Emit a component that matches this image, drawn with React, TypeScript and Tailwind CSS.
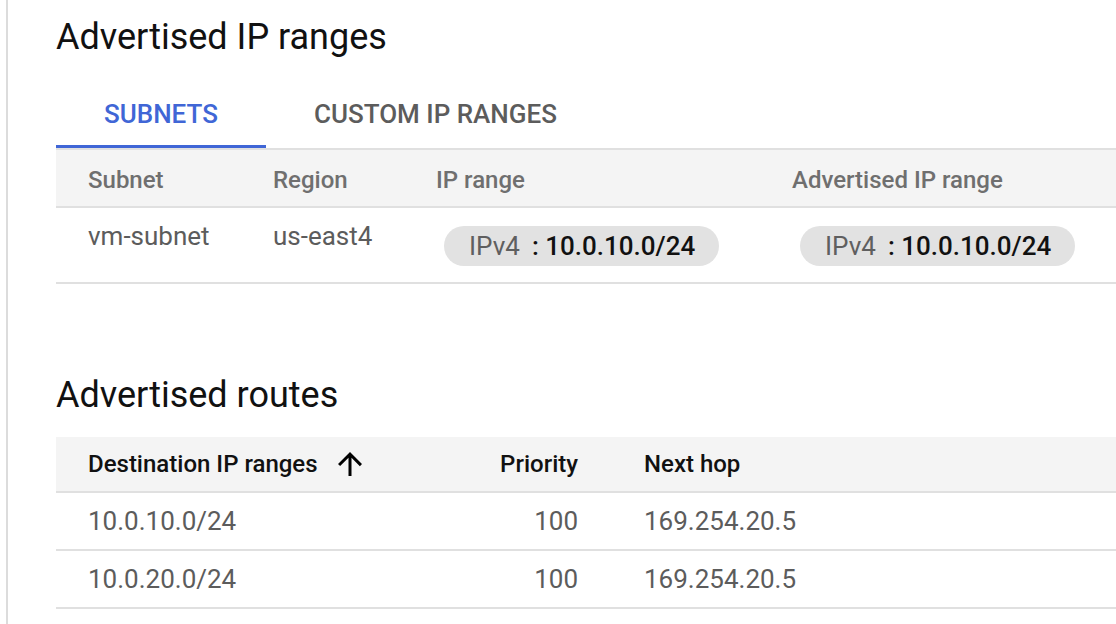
import React from 'react';

const subnets = [
  { name: 'vm-subnet', region: 'us-east4', range: '10.0.10.0/24', advertised: '10.0.10.0/24' },
];

const routes = [
  { dest: '10.0.10.0/24', priority: 100, hop: '169.254.20.5' },
  { dest: '10.0.20.0/24', priority: 100, hop: '169.254.20.5' },
];

const IpChip: React.FC<{ value: string }> = ({ value }) => (
  <div className="ml-2 inline-flex h-[40px] items-center rounded-full bg-[#e2e2e2] pl-[25px] pr-[24px] text-[26px] leading-[32px]">
    <span className="text-[#5f5f5f]">IPv4</span>
    <span className="ml-[12px] font-medium text-[#111]">: {value}</span>
  </div>
);

const ArrowUp: React.FC = () => (
  <svg width="36" height="36" viewBox="0 0 24 24" className="ml-[14px]" fill="#000">
    <path d="M4 12l1.41 1.41L11 7.83V20h2V7.83l5.58 5.59L20 12l-8-8-8 8z" />
  </svg>
);

const App: React.FC = () => {
  return (
    <div className="min-h-screen bg-white font-['Roboto',sans-serif] overflow-hidden">
      <div className="ml-[6px] min-h-[624px] border-l-2 border-[#dcdcdc] pl-[48px]">
        {/* Advertised IP ranges */}
        <h2 className="pt-[15px] text-[36px] leading-[44px] text-[#111]">Advertised IP ranges</h2>

        <div className="mt-[21px] flex h-[68px] text-[26px] font-medium leading-[32px]">
          <div className="flex items-center border-b-[3px] border-[#4066d6] px-[48px] pt-[3px] text-[#4066d6]">SUBNETS</div>
          <div className="flex items-center px-[48px] text-[#5c5c5c]">CUSTOM IP RANGES</div>
        </div>

        <div className="border-t-2 border-[#e0e0e0]">
          <div className="flex h-[58px] items-center border-b-2 border-[#e0e0e0] bg-[#f4f4f4] pl-[32px] pt-[3px] text-[24px] font-medium text-[#6f6f6f]">
            <div className="w-[185px]">Subnet</div>
            <div className="w-[163px]">Region</div>
            <div className="w-[356px]">IP range</div>
            <div>Advertised IP range</div>
          </div>
          {subnets.map((s) => (
            <div key={s.name} className="flex items-start border-b-2 border-[#e0e0e0] pl-[32px] text-[26px] leading-[32px] text-[#5c5c5c]">
              <div className="w-[185px] pt-[12px]">{s.name}</div>
              <div className="w-[163px] pt-[12px]">{s.region}</div>
              <div className="w-[356px] pt-[18px] pb-[16px]">
                <IpChip value={s.range} />
              </div>
              <div className="pt-[18px] pb-[16px]">
                <IpChip value={s.advertised} />
              </div>
            </div>
          ))}
        </div>

        {/* Advertised routes */}
        <h2 className="mt-[89px] text-[36px] leading-[44px] text-[#111]">Advertised routes</h2>

        <div className="mt-[20px]">
          <div className="flex h-[56px] items-center border-b-2 border-[#e0e0e0] bg-[#f4f4f4] pl-[32px] text-[24px] font-medium text-[#111]">
            <div className="flex w-[390px] items-center">
              Destination IP ranges
              <ArrowUp />
            </div>
            <div className="w-[100px] text-right">Priority</div>
            <div className="ml-[66px]">Next hop</div>
          </div>
          {routes.map((r) => (
            <div key={r.dest} className="flex h-[58px] items-center border-b-2 border-[#e0e0e0] pl-[32px] text-[26px] text-[#5c5c5c]">
              <div className="w-[390px]">{r.dest}</div>
              <div className="w-[100px] text-right">{r.priority}</div>
              <div className="ml-[66px]">{r.hop}</div>
            </div>
          ))}
        </div>
      </div>
    </div>
  );
};

export default App;
